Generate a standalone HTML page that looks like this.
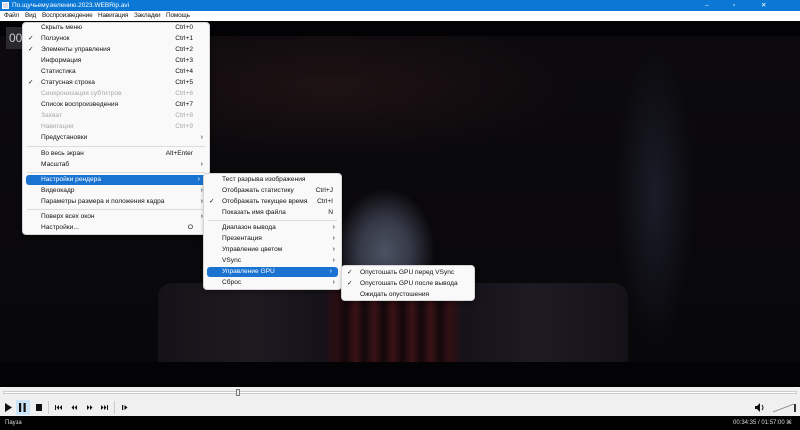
<!DOCTYPE html>
<html><head><meta charset="utf-8"><style>
*{margin:0;padding:0;box-sizing:border-box}
body{width:800px;height:430px;overflow:hidden;position:relative;background:#000;font-family:"Liberation Sans","DejaVu Sans",sans-serif;font-size:6.6px;color:#111}
.abs{position:absolute}
#title{left:0;top:0;width:800px;height:11px;background:#0a78d4;color:#fff;font-size:6.5px;line-height:11px;padding-left:12px}
#menubar{left:0;top:11px;width:800px;height:10px;background:#fff;font-size:6.4px;line-height:10px}
#menubar span{position:absolute;top:0;letter-spacing:-0.15px}
#video{left:0;top:21px;width:800px;height:366px;background:#030305}
#pic{left:0;top:36px;width:800px;height:326px;background:
radial-gradient(ellipse 50px 62px at 385px 215px,#4c5262 0%,#363a48 50%,rgba(25,25,35,0) 100%),
radial-gradient(ellipse 40px 150px at 655px 160px,#1a1c28 0%,rgba(20,20,30,0) 100%),
radial-gradient(ellipse 250px 70px at 330px 50px,#1e1214 0%,rgba(20,12,14,0) 100%),
linear-gradient(#0c0a0d,#08070a)}
.menu{background:#f9f9f9;border:1px solid #d6d6d6;border-radius:4px;box-shadow:1px 2px 4px rgba(0,0,0,.35)}
.it{position:absolute;left:0;right:0;height:10px;line-height:10px}
.it .t{position:absolute;left:18px}
.it .k{position:absolute;right:16px}
.it .a{position:absolute;right:6px;font-size:7px}
.it .c{position:absolute;left:5px}
.dis{color:#a8a8a8}
.hl{background:#1a73d0;color:#fff;border-radius:3px;left:3px;right:3px}
.sep{position:absolute;left:4px;right:4px;height:1px;background:#dcdcdc}
#seek{left:0;top:387px;width:800px;height:12px;background:#f0f0f0}
#ctrl{left:0;top:399px;width:800px;height:17px;background:#f0f0f0}
#status{left:0;top:416px;width:800px;height:14px;background:#000;color:#ddd;font-size:6px;line-height:14px}
</style></head><body>
<div id="title" class="abs"><span style="position:absolute;left:2px;top:2px;width:7px;height:7px;background:#dde;border:1px solid #fff"></span>По.щучьему.велению.2023.WEBRip.avi
<span style="position:absolute;left:705px;top:0">–</span><span style="position:absolute;left:733px;top:0">▫</span><span style="position:absolute;left:761px;top:0">✕</span></div>
<div id="menubar" class="abs"><span style="left:4px">Файл</span><span style="left:25px">Вид</span><span style="left:42px">Воспроизведение</span><span style="left:98px">Навигация</span><span style="left:134px">Закладки</span><span style="left:166px">Помощь</span></div>
<div id="video" class="abs"></div>
<div id="pic" class="abs"></div>
<div class="abs" style="left:158px;top:283px;width:470px;height:79px;background:linear-gradient(90deg,#141218 0%,#1e1a20 20%,#15121a 35%,#2a0e12 38%,#12080a 40%,#3a1216 42%,#12080a 44%,#3a1216 46%,#12080a 48%,#3a1216 50%,#12080a 52%,#3a1216 54%,#12080a 56%,#3a1216 58%,#12080a 60%,#321014 62%,#15121a 65%,#1e1a22 80%,#141218 100%);border-radius:14px 14px 0 0"></div>
<div class="abs" style="left:6px;top:27px;width:18px;height:22px;background:#2a2a2e;color:#ccc;font-size:12px;line-height:22px;padding-left:3px">00</div>

<div class="menu abs" style="left:22px;top:22px;width:188px;height:213px">
<div class="it" style="top:0"><span class="t">Скрыть меню</span><span class="k">Ctrl+0</span></div>
<div class="it" style="top:11px"><span class="c">✓</span><span class="t">Ползунок</span><span class="k">Ctrl+1</span></div>
<div class="it" style="top:22px"><span class="c">✓</span><span class="t">Элементы управления</span><span class="k">Ctrl+2</span></div>
<div class="it" style="top:33px"><span class="t">Информация</span><span class="k">Ctrl+3</span></div>
<div class="it" style="top:44px"><span class="t">Статистика</span><span class="k">Ctrl+4</span></div>
<div class="it" style="top:55px"><span class="c">✓</span><span class="t">Статусная строка</span><span class="k">Ctrl+5</span></div>
<div class="it dis" style="top:66px"><span class="t">Синхронизация субтитров</span><span class="k">Ctrl+6</span></div>
<div class="it" style="top:77px"><span class="t">Список воспроизведения</span><span class="k">Ctrl+7</span></div>
<div class="it dis" style="top:88px"><span class="t">Захват</span><span class="k">Ctrl+8</span></div>
<div class="it dis" style="top:99px"><span class="t">Навигация</span><span class="k">Ctrl+9</span></div>
<div class="it" style="top:110px"><span class="t">Предустановки</span><span class="a">›</span></div>
<div class="sep" style="top:123px"></div>
<div class="it" style="top:126px"><span class="t">Во весь экран</span><span class="k">Alt+Enter</span></div>
<div class="it" style="top:137px"><span class="t">Масштаб</span><span class="a">›</span></div>
<div class="sep" style="top:149px"></div>
<div class="it hl" style="top:152px"><span class="t" style="left:15px">Настройки рендера</span><span class="a">›</span></div>
<div class="it" style="top:163px"><span class="t">Видеокадр</span><span class="a">›</span></div>
<div class="it" style="top:174px"><span class="t">Параметры размера и положения кадра</span><span class="a">›</span></div>
<div class="sep" style="top:186px"></div>
<div class="it" style="top:189px"><span class="t">Поверх всех окон</span><span class="a">›</span></div>
<div class="it" style="top:200px"><span class="t">Настройки...</span><span class="k">O</span></div>
</div>

<div class="menu abs" style="left:203px;top:173px;width:139px;height:117px">
<div class="it" style="top:1px"><span class="t">Тест разрыва изображения</span></div>
<div class="it" style="top:12px"><span class="t">Отображать статистику</span><span class="k" style="right:8px">Ctrl+J</span></div>
<div class="it" style="top:23px"><span class="c">✓</span><span class="t">Отображать текущее время</span><span class="k" style="right:8px">Ctrl+I</span></div>
<div class="it" style="top:34px"><span class="t">Показать имя файла</span><span class="k" style="right:8px">N</span></div>
<div class="sep" style="top:46px"></div>
<div class="it" style="top:49px"><span class="t">Диапазон вывода</span><span class="a">›</span></div>
<div class="it" style="top:60px"><span class="t">Презентация</span><span class="a">›</span></div>
<div class="it" style="top:71px"><span class="t">Управление цветом</span><span class="a">›</span></div>
<div class="it" style="top:82px"><span class="t">VSync</span><span class="a">›</span></div>
<div class="it hl" style="top:93px"><span class="t" style="left:15px">Управление GPU</span><span class="a">›</span></div>
<div class="it" style="top:104px"><span class="t">Сброс</span><span class="a">›</span></div>
</div>

<div class="menu abs" style="left:341px;top:265px;width:134px;height:36px">
<div class="it" style="top:2px"><span class="c">✓</span><span class="t">Опустошать GPU перед VSync</span></div>
<div class="it" style="top:13px"><span class="c">✓</span><span class="t">Опустошать GPU после вывода</span></div>
<div class="it" style="top:24px"><span class="t">Ожидать опустошения</span></div>
</div>

<div id="seek" class="abs"><div class="abs" style="left:3px;top:4px;width:794px;height:3px;background:#fff;border:1px solid #ccc"></div><div class="abs" style="left:236px;top:2px;width:4px;height:7px;background:#eee;border:1px solid #777"></div></div>
<div id="ctrl" class="abs">
<span class="abs" style="left:16px;top:1px;width:14px;height:15px;background:#cce4f7"></span>
<svg class="abs" style="left:0;top:0" width="140" height="17" fill="#111">
<path d="M5 4 L12 8.5 L5 13 Z"/>
<rect x="19" y="4" width="2.2" height="9"/><rect x="23.5" y="4" width="2.2" height="9"/>
<rect x="36" y="5" width="6" height="7"/>
<rect x="48" y="2" width="1" height="13" fill="#ccc"/>
<rect x="55" y="6" width="1" height="5"/><path d="M59 6 L56.5 8.5 L59 11Z M62 6 L59.5 8.5 L62 11Z"/>
<path d="M74 6 L71.5 8.5 L74 11Z M77 6 L74.5 8.5 L77 11Z"/>
<path d="M87 6 L89.5 8.5 L87 11Z M90 6 L92.5 8.5 L90 11Z"/>
<path d="M101 6 L103.5 8.5 L101 11Z M104 6 L106.5 8.5 L104 11Z"/><rect x="107" y="6" width="1" height="5"/>
<rect x="114" y="2" width="1" height="13" fill="#ccc"/>
<rect x="122" y="6" width="1.2" height="5"/><path d="M124.5 6 L127.5 8.5 L124.5 11Z"/>
</svg>
<svg class="abs" style="left:754px;top:3px" width="12" height="11"><path d="M1 4 H3 L6 1 V10 L3 7 H1Z" fill="#111"/><path d="M8 3 Q10 5.5 8 8" stroke="#111" fill="none"/></svg>
<svg class="abs" style="left:772px;top:3px" width="26" height="12"><line x1="1" y1="10" x2="22" y2="2" stroke="#999"/><rect x="22" y="2" width="2" height="8" fill="#333"/></svg>
</div>
<div id="status" class="abs"><span style="position:absolute;left:5px">Пауза</span><span style="position:absolute;left:733px">00:34:35 / 01:57:00</span><span style="position:absolute;left:786px">⌘</span></div>
</body></html>
